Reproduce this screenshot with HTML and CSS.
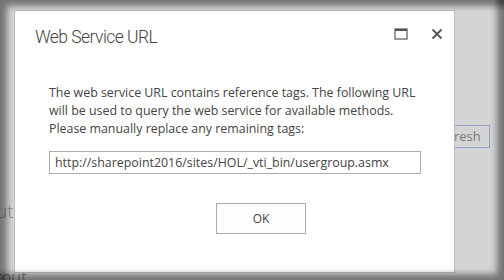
FILE: index.html
```html
<!DOCTYPE html>
<html lang="en-US">
<head>
  <meta charset="UTF-8">
  <title>Web Service URL</title>
  <link rel="stylesheet" href="styles.css">
</head>
<body>
  <div class="page">
    <span class="behind label-a">ut</span>
    <span class="behind refresh">resh</span>
    <span class="behind label-b">tout</span>

    <section class="dialog">
      <header class="dialog-head">
        <h1>Web Service URL</h1>
        <div class="dialog-tools">
          <svg class="tool" width="14" height="12" viewBox="0 0 14 12">
            <rect x="1" y="1" width="12" height="10" fill="none" stroke="#555" stroke-width="1.2"/>
            <rect x="1" y="1" width="12" height="2" fill="#555"/>
          </svg>
          <svg class="tool" width="12" height="12" viewBox="0 0 12 12">
            <path d="M1.5 1.5 L10.5 10.5 M10.5 1.5 L1.5 10.5" stroke="#555" stroke-width="1.8"/>
          </svg>
        </div>
      </header>
      <div class="dialog-body">
        <p>The web service URL contains reference tags. The following URL will be used to query the web service for available methods. Please manually replace any remaining tags:</p>
        <div class="url-field">http://sharepoint2016/sites/HOL/_vti_bin/usergroup.asmx</div>
        <div class="actions">
          <button class="btn">OK</button>
        </div>
      </div>
    </section>
    <div class="vignette"></div>
  </div>
</body>
</html>
```
FILE: styles.css
```css
body {
  margin: 0;
  background: #d4d4d4;
  font-family: "Open Sans", "Noto Sans", Arial, sans-serif;
  color: #444;
}
.page {
  position: relative;
  width: 504px;
  height: 280px;
  overflow: hidden;
}

/* page content under the modal overlay */
.behind {
  position: absolute;
  color: #8a8a8a;
  font-size: 16px;
}
.label-a { left: -4px; top: 198px; font-size: 19px; font-weight: 300; }
.label-b { left: -4px; top: 266px; font-size: 16px; }
.refresh {
  left: 440px;
  top: 125px;
  width: 50px;
  height: 23px;
  border: 1px solid #8fa7c4;
  color: #7a7a7a;
  font-size: 13px;
  line-height: 21px;
  padding-left: 13px;
  box-sizing: border-box;
}

.dialog {
  position: absolute;
  left: 14px;
  top: 10px;
  width: 441px;
  height: 263px;
  box-sizing: border-box;
  background: #fff;
  border: 1px solid #bdbdbd;
}
.dialog-head {
  display: flex;
  justify-content: space-between;
  align-items: flex-start;
  padding: 13px 11px 0 20px;
}
.dialog-head h1 {
  margin: 0;
  font-family: Roboto, "Open Sans", sans-serif;
  font-size: 17.5px;
  font-weight: 300;
  letter-spacing: -0.55px;
  color: #444;
  line-height: 26px;
}
.dialog-tools {
  display: flex;
  gap: 23px;
  padding-top: 4px;
}
.tool { display: block; }

.dialog-body {
  padding: 34px 34px 0 34px;
}
.dialog-body p {
  margin: 0;
  font-size: 12.4px;
  line-height: 18px;
  color: #444;
}
.url-field {
  margin-top: 13px;
  width: 372px;
  height: 23px;
  box-sizing: border-box;
  border: 1px solid #ababab;
  padding: 0 5px;
  font-size: 12.4px;
  line-height: 21px;
  color: #444;
}
.actions {
  display: flex;
  margin-top: 29px;
  padding-left: 167px;
}
.btn {
  width: 90px;
  height: 31px;
  border: 1px solid #ababab;
  background: #fdfdfd;
  font-family: inherit;
  font-size: 12px;
  color: #444;
}

.vignette {
  position: absolute;
  inset: 0;
  pointer-events: none;
  box-shadow: inset 9px 8px 6px -2px rgba(0,0,0,0.45), inset -9px -8px 6px -2px rgba(0,0,0,0.45);
}
```
